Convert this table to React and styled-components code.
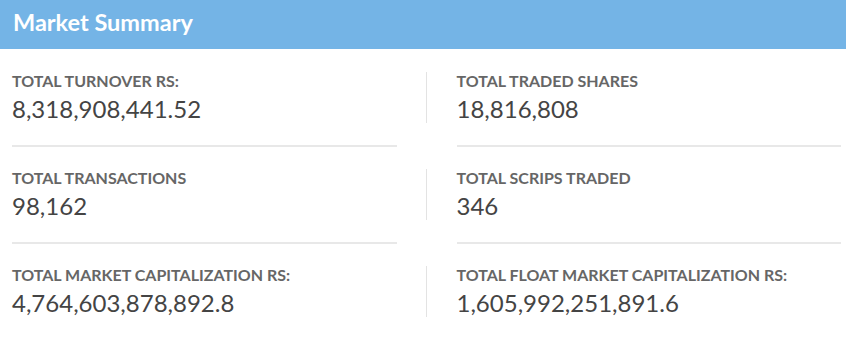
import React from "react";
import styled, { createGlobalStyle } from "styled-components";

const GlobalStyle = createGlobalStyle`
  body {
    margin: 0;
    background: #fff;
    font-family: Lato, "Noto Sans", sans-serif;
  }
`;

const Panel = styled.section`
  width: 846px;
  background: #fff;
`;

const Header = styled.div`
  height: 49px;
  box-sizing: border-box;
  padding: 10px 0 0 13px;
  background: #74b4e6;
  color: #fff;
  font-size: 23.5px;
  line-height: 24px;
  font-weight: 700;
`;

const Grid = styled.div`
  display: grid;
  grid-template-columns: 1fr 1fr;
  column-gap: 60px;
  padding: 23px 5px 0 12px;
`;

const Cell = styled.div`
  display: flex;
  flex-direction: column;
`;

const Stat = styled.div`
  display: flex;
  flex-direction: column;
  height: 51px;
  ${(p) =>
    p.$divided &&
    `
    margin-left: -31px;
    padding-left: 30px;
    border-left: 1px solid #e3e3e3;
  `}
`;

const Label = styled.div`
  font-size: 16px;
  line-height: 18px;
  font-weight: 700;
  color: #666;
  text-transform: uppercase;
`;

const Value = styled.div`
  margin-top: 4px;
  font-size: 24px;
  line-height: 29px;
  color: #444;
`;

const Divider = styled.div`
  height: 2px;
  margin: 22px 0;
  background: #e8e8e8;
`;

const stats = [
  ["Total Turnover Rs:", "8,318,908,441.52"],
  ["Total Traded Shares", "18,816,808"],
  ["Total Transactions", "98,162"],
  ["Total Scrips Traded", "346"],
  ["Total Market Capitalization Rs:", "4,764,603,878,892.8"],
  ["Total Float Market Capitalization Rs:", "1,605,992,251,891.6"],
];

const App = () => {
  return (
    <>
      <GlobalStyle />
      <Panel>
        <Header>Market Summary</Header>
        <Grid>
          {stats.map(([label, value], i) => (
            <Cell key={label}>
              <Stat $divided={i % 2 === 1}>
                <Label>{label}</Label>
                <Value>{value}</Value>
              </Stat>
              {i < stats.length - 2 && <Divider />}
            </Cell>
          ))}
        </Grid>
      </Panel>
    </>
  );
};

export default App;
